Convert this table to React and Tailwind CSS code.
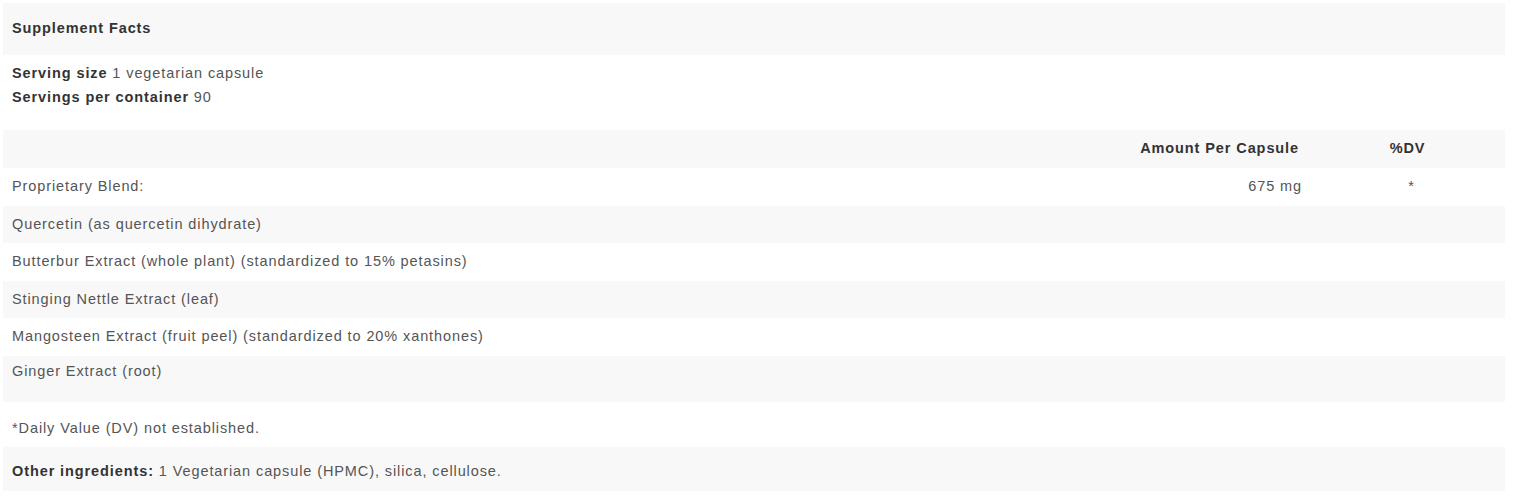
export default function App() {
  const font = { fontFamily: '"Liberation Sans", Arial, sans-serif' };
  const rows = [
    { name: "Proprietary Blend:", amt: "675 mg", dv: "*", bg: false },
    { name: "Quercetin (as quercetin dihydrate)", bg: true },
    { name: "Butterbur Extract (whole plant) (standardized to 15% petasins)", bg: false },
    { name: "Stinging Nettle Extract (leaf)", bg: true },
    { name: "Mangosteen Extract (fruit peel) (standardized to 20% xanthones)", bg: false },
  ];
  return (
    <div className="w-[1515px] h-[500px] bg-white pt-[3px] pl-[3px] text-[14.5px] tracking-[0.9px] text-[#555]" style={font}>
      <div className="w-[1502px]">
        <div className="h-[52px] bg-[#f8f8f8] flex items-center pl-[9px] font-bold text-[#333]">
          Supplement Facts
        </div>
        <div className="h-[75px] pl-[9px] pt-[6px] leading-[24px]">
          <div><span className="font-bold text-[#333]">Serving size</span> 1 vegetarian capsule</div>
          <div><span className="font-bold text-[#333]">Servings per container</span> 90</div>
        </div>
        <div className="h-[38px] bg-[#f8f8f8] flex items-center font-bold text-[#333]">
          <div className="flex-1"></div>
          <div className="w-[200px] text-right pr-[11px]">Amount Per Capsule</div>
          <div className="w-[195px] text-center">%DV</div>
        </div>
        {rows.map((r, i) => (
          <div key={i} className={`h-[37.6px] flex items-center ${r.bg ? "bg-[#f8f8f8]" : ""}`}>
            <div className="flex-1 pl-[9px]">{r.name}</div>
            <div className="w-[200px] text-right pr-[8px]">{r.amt || ""}</div>
            <div className="w-[195px] text-center pl-[8px]">{r.dv || ""}</div>
          </div>
        ))}
        <div className="h-[46px] bg-[#f8f8f8] pl-[9px] pt-[6px] leading-[18px]">
          Ginger Extract (root)
        </div>
        <div className="h-[45px] pl-[9px] pt-[17px] leading-[18px]">
          *Daily Value (DV) not established.
        </div>
        <div className="h-[44px] bg-[#f8f8f8] pl-[9px] pt-[15px] leading-[18px]">
          <span className="font-bold text-[#333]">Other ingredients:</span> 1 Vegetarian capsule (HPMC), silica, cellulose.
        </div>
      </div>
    </div>
  );
}
